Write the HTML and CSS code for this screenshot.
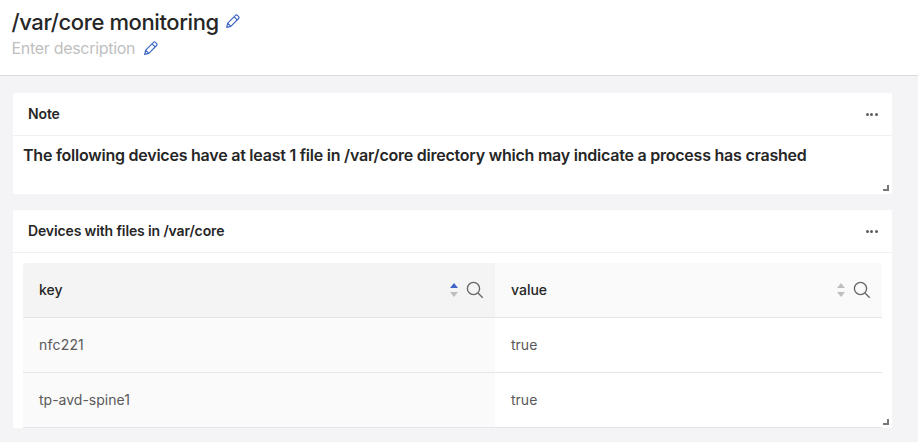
FILE: index.html
```
<!DOCTYPE html>
<html lang="en">
<head>
<meta charset="utf-8">
<title>/var/core monitoring</title>
<link rel="stylesheet" href="styles.css">
</head>
<body>
<svg class="defs" aria-hidden="true">
  <symbol id="pencil" viewBox="0 0 14 14">
    <path d="M.7 13.3 1.7 9.2 9.5 1.4Q10.4.5 11.4 1.4L12.6 2.6Q13.5 3.6 12.6 4.5L4.8 12.3ZM8.1 2.8 11.2 5.9M1.7 9.2 4.8 12.3"/>
  </symbol>
  <symbol id="search" viewBox="0 0 18 18">
    <circle cx="7.5" cy="7.5" r="6.1"/>
    <path d="m12 12 4.7 4.7"/>
  </symbol>
</svg>
<header class="page-header">
  <div class="title-row"><h1 class="title">/var/core monitoring</h1><svg class="pencil"><use href="#pencil"/></svg></div>
  <div class="desc-row"><span class="desc">Enter description</span><svg class="pencil"><use href="#pencil"/></svg></div>
</header>
<main class="board">
  <section class="card note">
    <div class="card-head"><h2 class="card-title note-title">Note</h2><span class="dots"><i></i><i></i><i></i></span></div>
    <p class="message">The following devices have at least 1 file in /var/core directory which may indicate a process has crashed</p>
    <span class="resize"></span>
  </section>
  <section class="card devices">
    <div class="card-head"><h2 class="card-title">Devices with files in /var/core</h2><span class="dots"><i></i><i></i><i></i></span></div>
    <div class="table">
      <div class="row head">
        <div class="cell key"><span class="label">key</span><span class="sort asc"></span><svg class="search"><use href="#search"/></svg></div>
        <div class="cell"><span class="label">value</span><span class="sort"></span><svg class="search"><use href="#search"/></svg></div>
      </div>
      <div class="row"><div class="cell key"><span class="label nfc">nfc221</span></div><div class="cell"><span class="label">true</span></div></div>
      <div class="row"><div class="cell key"><span class="label">tp-avd-spine1</span></div><div class="cell"><span class="label">true</span></div></div>
    </div>
    <span class="resize"></span>
  </section>
</main>
</body>
</html>
```
FILE: styles.css
```
* { box-sizing: border-box; }
body {
  margin: 0;
  height: 442px;
  overflow: hidden;
  background: #f4f4f7;
  color: #262626;
  font-family: Inter, "Liberation Sans", sans-serif;
  font-size: 14px;
}
h1, h2, p { margin: 0; }
.defs { position: absolute; width: 0; height: 0; }
.page-header {
  height: 76px;
  padding: 7px 11.5px 0;
  background: #fff;
  border-bottom: 1px solid #d9d9dc;
}
.title-row { display: flex; align-items: center; height: 28px; gap: 8px; }
.title { width: 206.5px; font-size: 22px; font-weight: 450; line-height: 30px; padding-top: 1px; letter-spacing: -0.4px; white-space: nowrap; }
.desc-row { display: flex; align-items: center; height: 26px; gap: 8px; }
.desc { width: 124.5px; font-size: 16px; line-height: 26px; color: #bfbfbf; letter-spacing: -0.3px; white-space: nowrap; }
.pencil { width: 14px; height: 14px; fill: none; stroke: #3f66c4; stroke-width: 1.2; stroke-linejoin: round; }
.board { display: flex; flex-direction: column; gap: 16px; padding: 17px 26px 0 13px; }
.card { position: relative; background: #fff; border-radius: 2px; }
.note { height: 101px; }
.devices { height: 218px; }
.card-head {
  display: flex;
  align-items: center;
  justify-content: space-between;
  height: 43px;
  padding: 0 14px 0 15px;
  border-bottom: 1px solid #f0f0f0;
}
.card-title { font-size: 14px; font-weight: 600; line-height: 22px; letter-spacing: -0.13px; }
.dots { display: flex; gap: 1.6px; }
.dots i { width: 3px; height: 3px; border-radius: 50%; background: #5d5d5d; }
.message { padding: 7px 10px 0; font-size: 16px; font-weight: 600; line-height: 25px; letter-spacing: -0.23px; white-space: nowrap; }
.resize {
  position: absolute;
  right: 3px;
  bottom: 3px;
  width: 6px;
  height: 6px;
  border: solid #777;
  border-width: 0 2px 2px 0;
}
.table { margin: 10px 10px 0; border-radius: 3px 3px 0 0; overflow: hidden; }
.row { display: grid; grid-template-columns: 472px 1fr; height: 55px; border-bottom: 1px solid #e6e6e8; color: #595959; }
.cell { display: flex; align-items: center; padding: 0 11px 0 16px; }
.label { padding-bottom: 2px; }
.nfc { letter-spacing: 0.2px; }
.key { background: #fafafa; }
.head { background: #fafafa; color: #262626; font-weight: 500; }
.head .key { background: #f4f4f4; }
.sort { display: flex; flex-direction: column; gap: 4px; margin-left: auto; margin-right: 8.5px; }
.sort::before, .sort::after { content: ""; border: 4px solid transparent; }
.sort::before { border-top: 0; border-bottom: 5px solid #bfbfbf; }
.sort::after { border-bottom: 0; border-top: 5px solid #bfbfbf; }
.sort.asc::before { border-bottom-color: #3f66c4; }
.search { width: 18px; height: 18px; fill: none; stroke: #666; stroke-width: 1.35; }
```
